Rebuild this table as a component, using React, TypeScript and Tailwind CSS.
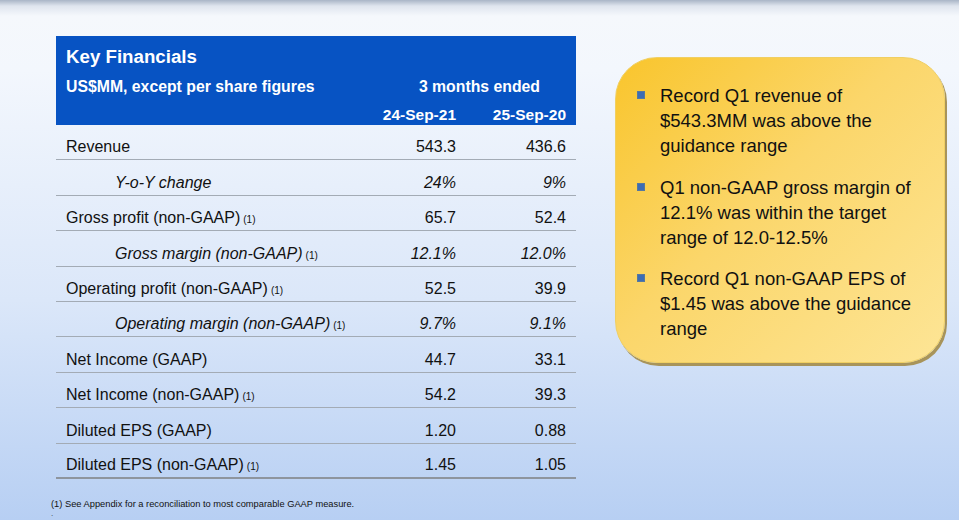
import React from 'react'

type Row = {
  label: string
  note?: boolean
  sub?: boolean
  cur: string
  prev: string
}

const rows: Row[] = [
  { label: 'Revenue', cur: '543.3', prev: '436.6' },
  { label: 'Y-o-Y change', sub: true, cur: '24%', prev: '9%' },
  { label: 'Gross profit (non-GAAP)', note: true, cur: '65.7', prev: '52.4' },
  { label: 'Gross margin (non-GAAP)', note: true, sub: true, cur: '12.1%', prev: '12.0%' },
  { label: 'Operating profit (non-GAAP)', note: true, cur: '52.5', prev: '39.9' },
  { label: 'Operating margin (non-GAAP)', note: true, sub: true, cur: '9.7%', prev: '9.1%' },
  { label: 'Net Income (GAAP)', cur: '44.7', prev: '33.1' },
  { label: 'Net Income (non-GAAP)', note: true, cur: '54.2', prev: '39.3' },
  { label: 'Diluted EPS (GAAP)', cur: '1.20', prev: '0.88' },
  { label: 'Diluted EPS (non-GAAP)', note: true, cur: '1.45', prev: '1.05' },
]

const bullets = [
  'Record Q1 revenue of $543.3MM was above the guidance range',
  'Q1 non-GAAP gross margin of 12.1% was within the target range of 12.0-12.5%',
  'Record Q1 non-GAAP EPS of $1.45 was above the guidance range',
]

function FinancialsTable() {
  return (
    <div className="w-[520px]">
      {/* blue header block */}
      <div className="bg-[#0753c3] text-white font-bold pt-[10px] pb-[1px] pl-[10px] pr-[10px]">
        <div className="text-[18.7px] leading-[22px]">Key Financials</div>
        <div className="flex mt-[10px] text-[15.8px] leading-[18px]">
          <div className="flex-1">US$MM, except per share figures</div>
          <div className="w-[220px] text-right pr-[26px]">3 months ended</div>
        </div>
        <div className="flex justify-end mt-[10px] text-[15.5px] leading-[18px]">
          <div className="w-[110px] text-right">24-Sep-21</div>
          <div className="w-[110px] text-right">25-Sep-20</div>
        </div>
      </div>

      {rows.map((r, i) => (
        <div
          key={r.label}
          className={`flex items-end h-[35.4px] pb-[3px] pl-[10px] pr-[10px] text-[16px] leading-[18px] text-[#111] ${
            i === rows.length - 1 ? 'border-b-2 border-[#8e959e]' : 'border-b-[1.5px] border-[#a3abb5]'
          } ${r.sub ? 'italic' : ''}`}
        >
          <div className={`flex-1 ${r.sub ? 'pl-[49px]' : ''}`}>
            {r.label}
            {r.note && <span className="not-italic text-[10px] leading-none ml-[3px]">(1)</span>}
          </div>
          <div className="w-[110px] text-right">{r.cur}</div>
          <div className="w-[110px] text-right">{r.prev}</div>
        </div>
      ))}
    </div>
  )
}

function HighlightsCard() {
  return (
    <div className="w-[330px] h-[306px] rounded-[42px] border border-[#f0cf62] bg-[linear-gradient(135deg,#f9c52c_0%,#fbd66a_45%,#fde596_100%)] shadow-[2px_3px_0_#a8945a] pt-[25px] pl-[21px]">
      <ul className="flex flex-col gap-[16.5px]">
        {bullets.map((b) => (
          <li key={b} className="flex">
            <span className="mt-[8px] w-[8px] h-[8px] bg-[#3c6cb4] border border-[#56789f] shrink-0" />
            <span className="ml-[15px] w-[262px] text-[18.5px] leading-[25px] text-[#111]">{b}</span>
          </li>
        ))}
      </ul>
    </div>
  )
}

export default function App() {
  return (
    <div
      className="w-[959px] h-[520px] overflow-hidden bg-[linear-gradient(180deg,#a9b5c6_0px,#dfe5ee_6px,#f5f8fc_16px,#f3f7fd_70px,#dbe7f9_300px,#b7cff3_100%)]"
      style={{ fontFamily: '"Liberation Sans", Arial, sans-serif' }}
    >
      <div className="flex pl-[56px] pt-[36px]">
        <FinancialsTable />
        <div className="ml-[39px] mt-[21px]">
          <HighlightsCard />
        </div>
      </div>
      <div className="pl-[51px] mt-[20px] text-[9.3px] leading-[11px] text-[#111]">
        (1) See Appendix for a reconciliation to most comparable GAAP measure.
      </div>
      <div className="pl-[51px] text-[8px] leading-[8px] text-[#333]">.</div>
    </div>
  )
}
